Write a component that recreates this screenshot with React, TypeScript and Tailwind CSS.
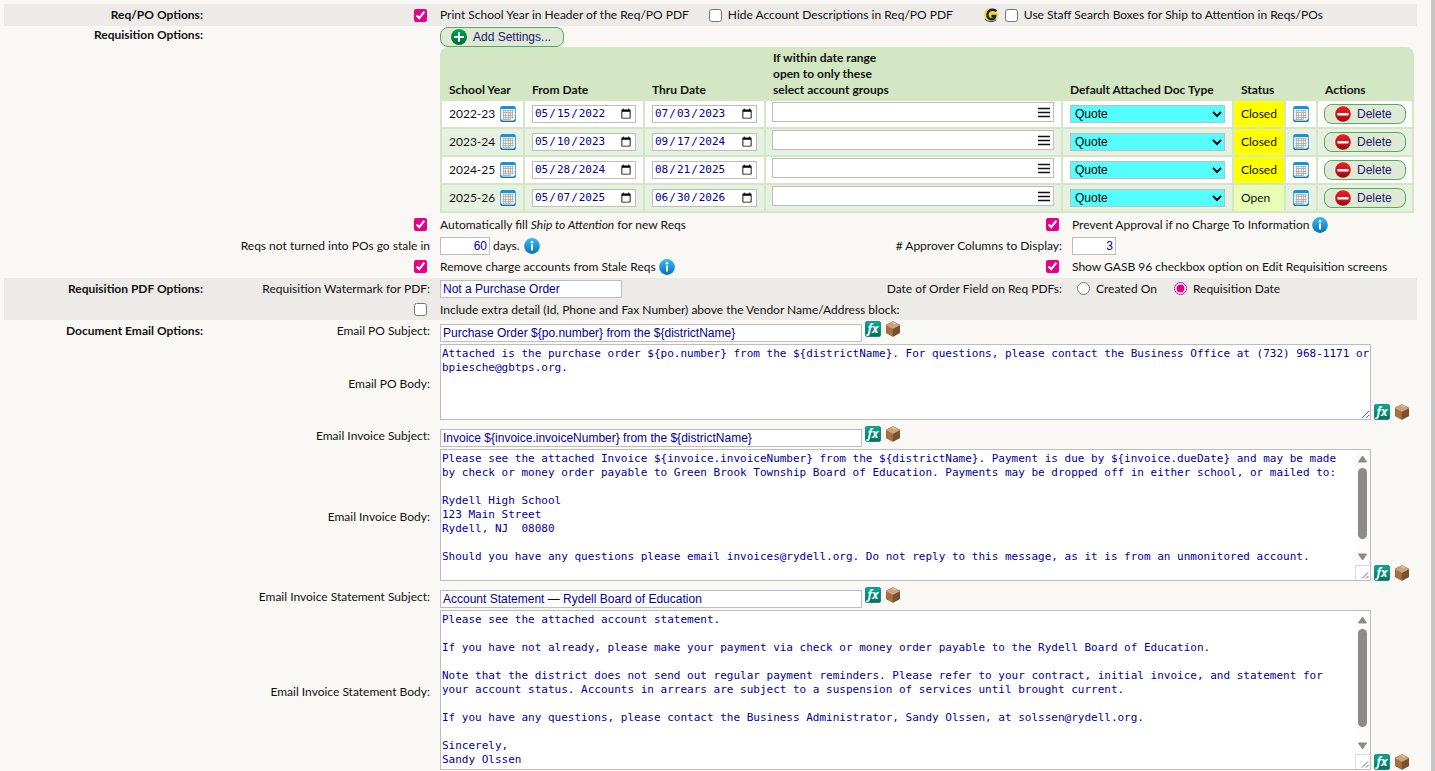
import React, { useState } from 'react';

type IconProps = { className?: string };

const AddIcon: React.FC<IconProps> = ({ className = 'size-4' }) => (
  <svg className={className} viewBox="0 0 16 16" aria-hidden="true">
    <defs>
      <linearGradient id="addFill" x1="0" y1="0" x2="0" y2="1">
        <stop offset="0" stopColor="#00a651" />
        <stop offset="1" stopColor="#006837" />
      </linearGradient>
    </defs>
    <circle cx="8" cy="8" r="8" fill="url(#addFill)" />
    <path d="M8 3.2v9.6M3.2 8h9.6" stroke="#fff" strokeWidth="2" />
  </svg>
);

const DeleteIcon: React.FC<IconProps> = ({ className = 'size-4' }) => (
  <svg className={className} viewBox="0 0 16 16" aria-hidden="true">
    <defs>
      <linearGradient id="deleteFill" x1="0" y1="0" x2="0" y2="1">
        <stop offset="0" stopColor="#ed1c24" />
        <stop offset="0.5" stopColor="#d6141c" />
        <stop offset="1" stopColor="#96070d" />
      </linearGradient>
    </defs>
    <circle cx="8" cy="8" r="7.8" fill="url(#deleteFill)" />
    <rect x="2.5" y="7" width="11" height="2.6" rx="0.4" fill="#fff" />
  </svg>
);

const CalendarIcon: React.FC<IconProps> = ({ className = 'size-4' }) => (
  <svg className={className} viewBox="0 0 16 16" aria-hidden="true">
    <rect x="0.6" y="0.6" width="14.8" height="14.8" rx="2.2" fill="#fff" fillOpacity="0.6" stroke="#4ba3d3" strokeWidth="1.1" />
    <path d="M0.5 3V2.6A2.3 2.3 0 0 1 2.8 0.3h10.4a2.3 2.3 0 0 1 2.3 2.3V3z" fill="#0b94d8" />
    <path d="M1 13.4a2 2 0 0 0 2 2h10a2 2 0 0 0 2-2" fill="none" stroke="#0f72ad" strokeWidth="1.2" />
    <path d="M2.500 4.500h11M2.500 6.500h11M2.500 9.500h11M2.500 11.500h11M2.500 13.500h8M3.500 4v10M5.500 4v10M8.500 4v10M10.500 4v9.500M12.500 4v8.500" fill="none" stroke="#a8a8a8" strokeWidth="0.8" />
  </svg>
);

const InfoIcon: React.FC<IconProps> = ({ className = 'size-4' }) => (
  <svg className={className} viewBox="0 0 16 16" aria-hidden="true">
    <defs>
      <linearGradient id="infoFill" x1="0" y1="0" x2="0" y2="1">
        <stop offset="0" stopColor="#3bbcf2" />
        <stop offset="1" stopColor="#0672b4" />
      </linearGradient>
    </defs>
    <circle cx="8" cy="8" r="7.9" fill="url(#infoFill)" />
    <circle cx="8" cy="4.2" r="1.2" fill="#fff" />
    <rect x="7" y="6.4" width="2" height="6" fill="#fff" />
  </svg>
);

const FormulaIcon: React.FC<IconProps> = ({ className = 'size-4' }) => (
  <svg className={className} viewBox="0 0 16 16" aria-hidden="true">
    <defs>
      <linearGradient id="formulaFill" x1="0" y1="0" x2="0" y2="1">
        <stop offset="0" stopColor="#00ae97" />
        <stop offset="1" stopColor="#00705f" />
      </linearGradient>
    </defs>
    <rect x="0.4" y="0.4" width="15.2" height="15.2" rx="2" fill="url(#formulaFill)" stroke="#007565" strokeWidth="0.8" />
    <text x="8" y="11.6" textAnchor="middle" fontFamily="Open Sans, sans-serif" fontStyle="italic" fontWeight="700" fontSize="12" fill="#fff">fx</text>
  </svg>
);

const BoxIcon: React.FC<IconProps> = ({ className = 'size-4' }) => (
  <svg className={className} viewBox="0 0 16 16" aria-hidden="true">
    <path d="M8 0.2 15 3.8V12L8 15.8 1 12V3.8z" fill="#7b5230" />
    <path d="M8 0.6 14.7 4 8 7.4 1.3 4z" fill="#cfa178" />
    <path d="M1.2 4.2 7.8 7.6V15.4L1.2 11.8z" fill="#a5713f" />
    <path d="M8.2 7.6 14.8 4.2V11.8L8.2 15.4z" fill="#7a5030" />
    <path d="M6.2 1.6 9.6 3.4 12 2.7 8.6 0.9z" fill="#e3c19f" />
    <path d="M1.3 4 8 7.4 14.7 4" fill="none" stroke="#e0bd98" strokeWidth="0.6" />
  </svg>
);

const GenesisIcon: React.FC<IconProps> = ({ className = 'size-4' }) => (
  <svg className={className} viewBox="0 0 16 16" aria-hidden="true">
    <circle cx="8" cy="8" r="7" fill="#fcd535" />
    <path d="M13.400 4.200C11 2 7 2.400 5.200 5 3.400 8 4.600 11.600 7.600 12.200c2.600.3 4.200-1 4.600-3.200H8.400" fill="none" stroke="#0d2a4d" strokeWidth="2.4" />
    <path d="M2 12C4.400 15 9.600 15.600 13 12.800" fill="none" stroke="#0d2a4d" strokeWidth="0.9" />
  </svg>
);

const inputClasses =
  "h-[18px] border border-[#bdbdbd] bg-white px-[2px] font-['Liberation_Sans',sans-serif] text-xs leading-4 text-[#00009c] outline-none";
const checkClasses = 'size-[13px] shrink-0 accent-[#e3008c]';
const buttonClasses =
  "flex h-5 items-center gap-1.5 rounded-lg border border-[#4fae5c] bg-[#dfe9d5] pl-2.5 font-['Liberation_Sans',sans-serif] text-xs text-[#191970]";

type RowProps = {
  heading?: string;
  label?: React.ReactNode;
  className?: string;
  children: React.ReactNode;
};

const Row: React.FC<RowProps> = ({ heading, label, className = 'min-h-[21px] items-center', children }) => (
  <div className={`grid grid-cols-[199px_227px_minmax(0,1fr)] ${className}`}>
    <div className="text-right font-bold">{heading}</div>
    <div className="flex items-center justify-end">{label}</div>
    <div className="pl-2.5">{children}</div>
  </div>
);

const Tools: React.FC = () => (
  <div className="flex gap-1">
    <button type="button" aria-label="Insert formula"><FormulaIcon /></button>
    <button type="button" aria-label="Insert object"><BoxIcon /></button>
  </div>
);

const Info: React.FC = () => (
  <button type="button" aria-label="More information"><InfoIcon /></button>
);

/* Two halves of a settings row: left field, then right label and control */
const Split: React.FC<{ left: React.ReactNode; label: React.ReactNode; children: React.ReactNode }> = ({ left, label, children }) => (
  <div className="grid grid-cols-[minmax(0,1fr)_345px] items-center gap-2.5">
    <div className="flex items-center justify-between">
      <div className="flex items-center gap-[3px]">{left}</div>
      {label}
    </div>
    <div className="flex items-center gap-[3px]">{children}</div>
  </div>
);

const settings = [
  { year: '2022-23', from: '2022-05-15', thru: '2023-07-03', status: 'Closed' },
  { year: '2023-24', from: '2023-05-10', thru: '2024-09-17', status: 'Closed' },
  { year: '2024-25', from: '2024-05-28', thru: '2025-08-21', status: 'Closed' },
  { year: '2025-26', from: '2025-05-07', thru: '2026-06-30', status: 'Open' },
];

const SettingsTable: React.FC = () => {
  const th = 'px-2 pb-px text-left align-bottom font-bold';
  const td = 'border-2 border-[#d3e7c5] px-[7px]';
  const dateClasses =
    "block h-[18px] w-full border border-[#bdbdbd] bg-white px-px font-['DejaVu_Sans_Mono',monospace] text-[11px] text-[#00009c] [&::-webkit-calendar-picker-indicator]:size-3";

  return (
    <div className="mr-[3px] overflow-hidden rounded-t-lg bg-[#d3e7c5]">
      <table className="w-full table-fixed border-collapse">
        <colgroup>
          <col className="w-[83px]" />
          <col className="w-[120px]" />
          <col className="w-[121px]" />
          <col />
          <col className="w-[171px]" />
          <col className="w-[52px]" />
          <col className="w-8" />
          <col className="w-24" />
        </colgroup>
        <thead>
          <tr className="h-[53px] whitespace-nowrap">
            <th className={th}>School Year</th>
            <th className={th}>From Date</th>
            <th className={th}>Thru Date</th>
            <th className={th}>If within date range<br />open to only these<br />select account groups</th>
            <th className={th}>Default Attached Doc Type</th>
            <th className={th}>Status</th>
            <th className={th}></th>
            <th className={th}>Actions</th>
          </tr>
        </thead>
        <tbody>
          {settings.map((s) => (
            <tr key={s.year} className="h-7 bg-white even:bg-[#e7f1e1]">
              <td className={td}>
                <div className="flex items-center justify-between">
                  {s.year}
                  <button type="button" aria-label={`Set year ${s.year}`}><CalendarIcon /></button>
                </div>
              </td>
              <td className={td}>
                <input type="date" aria-label={`From date ${s.year}`} defaultValue={s.from} className={dateClasses} />
              </td>
              <td className={td}>
                <input type="date" aria-label={`Thru date ${s.year}`} defaultValue={s.thru} className={dateClasses} />
              </td>
              <td className="border-2 border-[#d3e7c5] px-1.5 pt-px align-top">
                <div className="mr-px flex h-5 border border-[#bdbdbd] bg-white">
                  <input type="text" aria-label={`Account groups ${s.year}`} className="min-w-0 flex-1 px-[2px] outline-none" />
                  <button type="button" aria-label="Choose account groups" className="flex items-center px-[3px]">
                    <svg className="size-3" viewBox="0 0 12 12" aria-hidden="true">
                      <path d="M0 2.500h12M0 6.500h12M0 10.500h12" stroke="#111" strokeWidth="1.7" />
                    </svg>
                  </button>
                </div>
              </td>
              <td className={td}>
                <div className="relative">
                  <select aria-label={`Document type ${s.year}`} className="block h-[18px] w-full appearance-none border border-[#bdbdbd] bg-[#55ffff] px-1 font-['Liberation_Sans',sans-serif] text-xs text-black">
                    <option>Quote</option>
                  </select>
                  <svg className="pointer-events-none absolute top-1 right-[3px] size-2.5" viewBox="0 0 10 10" aria-hidden="true">
                    <path d="M1 3l4 4 4-4" fill="none" stroke="#111" strokeWidth="2" />
                  </svg>
                </div>
              </td>
              <td className={`${td} ${s.status === 'Closed' ? 'bg-[#ffff00]' : 'bg-[#e6ffb3]'}`}>{s.status}</td>
              <td className={td}>
                <button type="button" aria-label={`Schedule ${s.year}`} className="block"><CalendarIcon /></button>
              </td>
              <td className="border-2 border-[#d3e7c5] px-1.5">
                <button type="button" className={`${buttonClasses} w-full`}>
                  <DeleteIcon />
                  Delete
                </button>
              </td>
            </tr>
          ))}
        </tbody>
      </table>
    </div>
  );
};

type EmailProps = {
  id: string;
  heading?: string;
  name: string;
  subject: string;
  body: string;
  heightClass: string;
  thumbClass?: string;
};

const EmailFields: React.FC<EmailProps> = ({ id, heading, name, subject, body, heightClass, thumbClass }) => (
  <>
    <Row
      heading={heading}
      className="min-h-[21px] items-start leading-5"
      label={<label htmlFor={`${id}-subject`}>{name} Subject:</label>}
    >
      <div className="flex h-[21px] items-start gap-[3px]">
        <input id={`${id}-subject`} type="text" defaultValue={subject} className={`${inputClasses} w-[422px] self-end`} />
        <Tools />
      </div>
    </Row>
    <Row label={<label htmlFor={`${id}-body`}>{name} Body:</label>}>
      <div className="mr-[7px] flex items-end gap-[3px] pt-[2px] pb-1.5">
        <div className="relative flex min-w-0 flex-1">
          <textarea
            id={`${id}-body`}
            defaultValue={body}
            className={`${heightClass} ${thumbClass ? 'pr-5' : 'pr-0'} w-full resize border border-[#bdbdbd] bg-white py-[2px] pl-px font-['DejaVu_Sans_Mono',monospace] text-[11px] leading-[14px] text-[#00009c] outline-none`}
          />
          {thumbClass && (
            <div className="pointer-events-none absolute inset-y-px right-px flex w-[15px] flex-col items-center bg-[#fcfcfc]" aria-hidden="true">
              <svg className="mt-[5px] h-2 w-[9px]" viewBox="0 0 9 8">
                <path d="M4.5 1 8.5 7h-8z" fill="#8b8b8b" stroke="#8b8b8b" strokeLinejoin="round" />
              </svg>
              <div className={`mt-[5px] w-[9px] rounded-full bg-[#8b8b8b] ${thumbClass}`} />
              <svg className="mt-auto mb-1 h-2 w-[9px]" viewBox="0 0 9 8">
                <path d="M4.5 7 8.5 1h-8z" fill="#8b8b8b" stroke="#8b8b8b" strokeLinejoin="round" />
              </svg>
              <svg className="size-[15px] border-t border-l border-[#dcdcdc] bg-white" viewBox="0 0 14 14">
                <path d="M6 12.500l6-6M10 12.500l2.500-2.500" stroke="#555" strokeWidth="0.9" />
              </svg>
            </div>
          )}
        </div>
        <Tools />
      </div>
    </Row>
  </>
);

const poBody =
  'Attached is the purchase order ${po.number} from the ${districtName}. For questions, please contact the Business Office at (732) 968-1171 or bpiesche@gbtps.org.';

const invoiceBody = `Please see the attached Invoice \${invoice.invoiceNumber} from the \${districtName}. Payment is due by \${invoice.dueDate} and may be made by check or money order payable to Green Brook Township Board of Education. Payments may be dropped off in either school, or mailed to:

Rydell High School
123 Main Street
Rydell, NJ  08080

Should you have any questions please email invoices@rydell.org. Do not reply to this message, as it is from an unmonitored account.`;

const statementBody = `Please see the attached account statement.

If you have not already, please make your payment via check or money order payable to the Rydell Board of Education.

Note that the district does not send out regular payment reminders. Please refer to your contract, initial invoice, and statement for your account status. Accounts in arrears are subject to a suspension of services until brought current.

If you have any questions, please contact the Business Administrator, Sandy Olssen, at solssen@rydell.org.

Sincerely,
Sandy Olssen`;

const App: React.FC = () => {
  const [orderDate, setOrderDate] = useState('requisition');

  return (
    <div className="flex min-h-screen bg-[#f9f8f4] font-[Lato,sans-serif] text-xs leading-4 text-[#111]">
      <main className="min-w-0 flex-1 space-y-px pt-1 pr-3.5 pl-1">
        <section className="bg-[#ecebe8]">
          <Row
            heading="Req/PO Options:"
            label={<input id="print-year" type="checkbox" defaultChecked className={`${checkClasses} mr-[3px]`} />}
            className="h-[22px] items-center"
          >
            <div className="flex items-center whitespace-nowrap">
              <label htmlFor="print-year">Print School Year in Header of the Req/PO PDF</label>
              <label className="ml-5 flex items-center gap-1.5">
                <input type="checkbox" className={checkClasses} />
                Hide Account Descriptions in Req/PO PDF
              </label>
              <GenesisIcon className="ml-[30px] size-4" />
              <label className="ml-1.5 flex items-center gap-1.5">
                <input type="checkbox" className={checkClasses} />
                Use Staff Search Boxes for Ship to Attention in Reqs/POs
              </label>
            </div>
          </Row>
        </section>

        <section className="space-y-px">
          <Row heading="Requisition Options:" className="items-start">
            <button type="button" className={`${buttonClasses} pr-3`}>
              <AddIcon />
              Add Settings...
            </button>
            <SettingsTable />
          </Row>
          <div>
            <Row label={<input id="auto-fill" type="checkbox" defaultChecked className={`${checkClasses} mr-[3px]`} />}>
              <Split
                left={<label htmlFor="auto-fill">Automatically fill <i>Ship to Attention</i> for new Reqs</label>}
                label={<input id="prevent-approval" type="checkbox" defaultChecked className={`${checkClasses} mr-[3px]`} />}
              >
                <label htmlFor="prevent-approval">Prevent Approval if no Charge To Information</label>
                <Info />
              </Split>
            </Row>
            <Row label={<label htmlFor="stale-days">Reqs not turned into POs go stale in</label>}>
              <Split
                left={
                  <>
                    <input id="stale-days" type="text" defaultValue="60" className={`${inputClasses} w-[50px] text-right`} />
                    <span className="mr-px">days.</span>
                    <Info />
                  </>
                }
                label={<label htmlFor="approver-columns"># Approver Columns to Display:</label>}
              >
                <input id="approver-columns" type="text" defaultValue="3" className={`${inputClasses} w-11 text-right`} />
              </Split>
            </Row>
            <Row label={<input id="remove-accounts" type="checkbox" defaultChecked className={`${checkClasses} mr-[3px]`} />}>
              <Split
                left={
                  <>
                    <label htmlFor="remove-accounts">Remove charge accounts from Stale Reqs</label>
                    <Info />
                  </>
                }
                label={<input id="show-gasb" type="checkbox" defaultChecked className={`${checkClasses} mr-[3px]`} />}
              >
                <label htmlFor="show-gasb">Show GASB 96 checkbox option on Edit Requisition screens</label>
              </Split>
            </Row>
          </div>
        </section>

        <section className="bg-[#ecebe8]">
          <Row heading="Requisition PDF Options:" label={<label htmlFor="watermark">Requisition Watermark for PDF:</label>}>
            <Split
              left={<input id="watermark" type="text" defaultValue="Not a Purchase Order" className={`${inputClasses} w-[182px]`} />}
              label={<span>Date of Order Field on Req PDFs:</span>}
            >
              <label className="ml-[5px] flex items-center gap-1.5">
                <input
                  type="radio"
                  name="order-date"
                  checked={orderDate === 'created'}
                  onChange={() => setOrderDate('created')}
                  className={checkClasses}
                />
                Created On
              </label>
              <label className="ml-3.5 flex items-center gap-1.5">
                <input
                  type="radio"
                  name="order-date"
                  checked={orderDate === 'requisition'}
                  onChange={() => setOrderDate('requisition')}
                  className={checkClasses}
                />
                Requisition Date
              </label>
            </Split>
          </Row>
          <Row label={<input id="extra-detail" type="checkbox" className={`${checkClasses} mr-[3px]`} />}>
            <label htmlFor="extra-detail">Include extra detail (Id, Phone and Fax Number) above the Vendor Name/Address block:</label>
          </Row>
        </section>

        <section>
          <EmailFields
            id="po"
            heading="Document Email Options:"
            name="Email PO"
            subject="Purchase Order ${po.number} from the ${districtName}"
            body={poBody}
            heightClass="h-[76px]"
          />
          <EmailFields
            id="invoice"
            name="Email Invoice"
            subject="Invoice ${invoice.invoiceNumber} from the ${districtName}"
            body={invoiceBody}
            heightClass="h-[132px]"
            thumbClass="h-[71px]"
          />
          <EmailFields
            id="statement"
            name="Email Invoice Statement"
            subject="Account Statement — Rydell Board of Education"
            body={statementBody}
            heightClass="h-40"
            thumbClass="h-[98px]"
          />
        </section>
      </main>
      <div className="w-1 shrink-0 bg-[#c6c6c6]" />
    </div>
  );
};

export default App;
